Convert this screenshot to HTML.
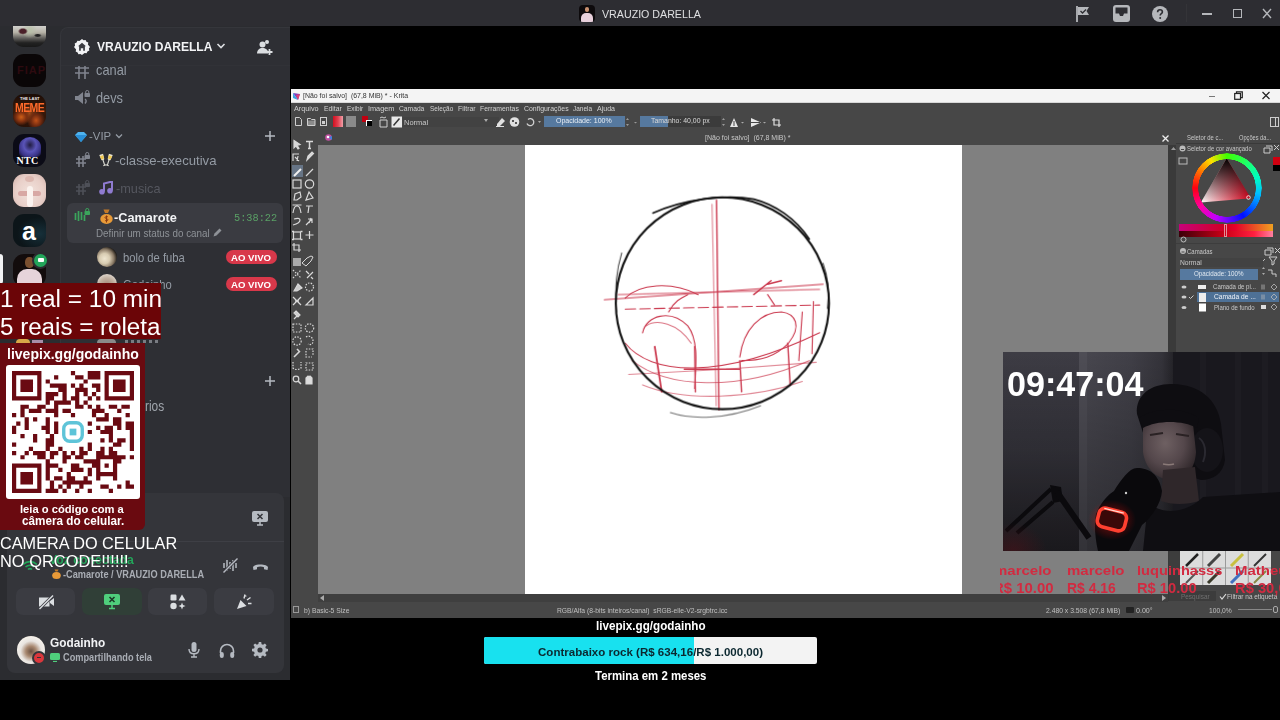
<!DOCTYPE html>
<html><head><meta charset="utf-8">
<style>
*{box-sizing:border-box;margin:0;padding:0}
html,body{width:1280px;height:720px;overflow:hidden;background:#000;font-family:"Liberation Sans",sans-serif;position:relative}
.a{position:absolute}
.tx{position:absolute;white-space:pre;line-height:1}
.srv{position:absolute;left:13px;width:33px;height:33px;border-radius:11px;overflow:hidden}
.live{position:absolute;left:226px;width:51px;height:14px;border-radius:7px;background:#d8384a;z-index:2}

</style></head><body>
<!-- discord -->
<div class="a" style="left:0;top:0;width:1280px;height:26px;background:#2d2d32"></div>
<div class="a" style="left:579px;top:5px;width:16px;height:17px;border-radius:4px;background:#0d0a0c;overflow:hidden"><div class="a" style="left:2px;top:8px;width:12px;height:9px;border-radius:5px 5px 0 0;background:#e8d0dc"></div><div class="a" style="left:6px;top:2px;width:4px;height:5px;border-radius:2px;background:#c89070"></div></div>
<!-- topbar icons -->
<svg class="a" style="left:1075px;top:5px" width="17" height="17" viewBox="0 0 17 17"><path d="M2 1v16" stroke="#b5b7bb" stroke-width="1.8"/><path d="M3 2h11l-2.5 4 2.5 4H3z" fill="#b5b7bb"/><path d="M5.5 6l2 2 3.5-3.5" stroke="#2d2d32" stroke-width="1.3" fill="none"/></svg>
<svg class="a" style="left:1113px;top:5px" width="17" height="17" viewBox="0 0 17 17"><rect x="0" y="0" width="17" height="17" rx="3" fill="#b5b7bb"/><path d="M2.5 2.5h12v6h-3.5l-1 2.5h-3l-1-2.5H2.5z" fill="#2d2d32"/></svg>
<svg class="a" style="left:1152px;top:6px" width="16" height="16" viewBox="0 0 16 16"><circle cx="8" cy="8" r="8" fill="#b5b7bb"/><path d="M5.6 6.2c0-1.5 1.1-2.4 2.4-2.4s2.4.9 2.4 2.2c0 1.6-2.2 1.7-2.2 3.4" stroke="#2d2d32" stroke-width="1.6" fill="none"/><circle cx="8.2" cy="12" r="1" fill="#2d2d32"/></svg>
<div class="a" style="left:1186px;top:4px;width:1px;height:18px;background:#343438"></div>
<div class="a" style="left:1202px;top:13px;width:10px;height:1.5px;background:#b5b7bb"></div>
<div class="a" style="left:1233px;top:9px;width:9px;height:9px;border:1.5px solid #b5b7bb"></div>
<svg class="a" style="left:1262px;top:8px" width="10" height="11" viewBox="0 0 10 11"><path d="M1 1l8 9M9 1l-8 9" stroke="#b5b7bb" stroke-width="1.4"/></svg>
<!-- discord body -->
<div class="a" style="left:0;top:26px;width:290px;height:654px;background:#2b2c30"></div>
<div class="a" style="left:60px;top:27px;width:230px;height:470px;border-left:1px solid #35363b;border-top:1px solid #35363b;border-top-left-radius:8px;background:#2e2f34"></div>
<div class="a" style="left:61px;top:65px;width:229px;height:1px;background:#313237"></div>
<!-- server icons -->
<div class="srv" style="top:26px;height:21px;border-radius:0 0 11px 11px;background:radial-gradient(ellipse at 30% 25%,#4a2028 0,#4a2028 3px,transparent 5px),radial-gradient(ellipse at 75% 45%,#222 0,#222 2px,transparent 4px),radial-gradient(ellipse at 50% 20%,#b8c0a8 0,transparent 8px),linear-gradient(180deg,#d0d0cc 0%,#b8b4a8 30%,#6a6864 55%,#222 80%,#181818 100%)"></div>
<div class="srv" style="top:54px;background:#0a0607"><span class="a" style="left:4px;top:10px;font:bold 11px 'Liberation Sans',sans-serif;color:#2e0a10;letter-spacing:1px">FIAP</span></div>
<div class="srv" style="top:94px;background:radial-gradient(ellipse at 25% 70%,#d06018 0,#803010 5px,transparent 9px),radial-gradient(ellipse at 70% 80%,#c05018 0,#702a10 5px,transparent 9px),radial-gradient(ellipse at 50% 60%,#a04a18 0,transparent 8px),linear-gradient(180deg,#1a0c06 0%,#3a1a0a 45%,#2a1208 100%)"><span class="a" style="left:7px;top:2px;font:bold 4px 'Liberation Sans',sans-serif;color:#eee">THE LAST</span><span class="a" style="left:2px;top:7px;font:bold 10.5px 'Liberation Sans',sans-serif;color:#ff6a2a;letter-spacing:-0.6px;transform:scaleY(1.2)">MEME</span></div>
<div class="srv" style="top:134px;background:#0b0b16"><div class="a" style="left:6px;top:3px;width:22px;height:20px;border-radius:50% 50% 20% 20%;background:radial-gradient(ellipse at 50% 40%,#201c40 0%,#5a54b8 40%,#3a3488 70%,#0b0b16 100%)"></div><span class="a" style="left:3.5px;top:21px;font:bold 10px 'Liberation Serif',serif;color:#fff;letter-spacing:.3px">NTC</span></div>
<div class="srv" style="top:174px;background:radial-gradient(ellipse at 50% 55%,#f2e2dc 0%,#e8cfc8 60%,#d0b0a8 100%)"><div class="a" style="left:12px;top:2px;width:9px;height:6px;border-radius:50%;background:#dcb8b0"></div><div class="a" style="left:5px;top:17px;width:23px;height:5px;background:#d8a8a4;border-radius:3px"></div><div class="a" style="left:13.5px;top:12px;width:6px;height:21px;background:#fbf3ef;border-radius:3px"></div></div>
<div class="srv" style="top:214px;background:radial-gradient(ellipse at 80% 60%,#16303a 0%,#0c1519 60%)"><span class="a" style="left:9px;top:3px;font:700 25px 'Liberation Sans',sans-serif;color:#fff">a</span></div>
<div class="srv" style="top:254px;background:#120c0c"><div class="a" style="left:12px;top:3px;width:9px;height:11px;border-radius:45%;background:#7a5030"></div><div class="a" style="left:4px;top:15px;width:25px;height:20px;border-radius:10px 10px 0 0;background:#e6d4da"></div></div>
<div class="a" style="left:32px;top:252px;width:17px;height:17px;border-radius:50%;background:#23a55a;border:2px solid #2b2c30"><div class="a" style="left:4px;top:4px;width:6px;height:4px;background:#fff;border-radius:1px"></div></div>
<div class="a" style="left:0;top:254px;width:3px;height:30px;background:#f2f3f5;border-radius:0 3px 3px 0"></div>
<!-- header icons -->
<svg class="a" style="left:74px;top:39px" width="16" height="16" viewBox="0 0 16 16"><path fill="#f2f3f5" d="M8 0l1.6 1.3 2-.4.8 1.9 1.9.8-.4 2L16 8l-1.1 1.6.4 2-1.9.8-.8 1.9-2-.4L8 16l-1.6-1.1-2 .4-.8-1.9-1.9-.8.4-2L0 8l1.1-1.6-.4-2 1.9-.8.8-1.9 2 .4z"/><path fill="#3b3c42" d="M8 3.8l4 3.4h-1.1v4.6H9.2V9.2H6.8v2.6H5.1V7.2H4z"/></svg>
<svg class="a" style="left:216px;top:42px" width="10" height="8" viewBox="0 0 10 8"><path d="M1.5 2l3.5 3.5L8.5 2" stroke="#dbdee1" stroke-width="1.6" fill="none"/></svg>
<svg class="a" style="left:256px;top:39px" width="17" height="17" viewBox="0 0 17 17"><circle cx="6.5" cy="5.5" r="3" fill="#dbdee1"/><path d="M1 14.5c0-3.5 2.5-5.5 5.5-5.5S12 11 12 13v1.5z" fill="#dbdee1"/><circle cx="11" cy="3" r="2" fill="#dbdee1"/><path d="M13.5 10v6M10.5 13h6" stroke="#dbdee1" stroke-width="1.8"/></svg>
<!-- canal (clipped) -->
<div class="a" style="left:61px;top:66px;width:229px;height:20px;overflow:hidden;z-index:2">
  <svg class="a" style="left:13px;top:-1px" width="16" height="14" viewBox="0 0 16 14"><path d="M1 3h14M1 8h14M5 1v13M11 1v13" stroke="#80848e" stroke-width="1.6" fill="none"/></svg>
  <span class="tx" style="left:35.3px;top:-3.55px;font:400 14.6px 'Liberation Sans',sans-serif;color:#949ba4;transform:scaleX(0.877);transform-origin:0 0">canal</span>
</div>
<svg class="a" style="left:74px;top:90px" width="17" height="16" viewBox="0 0 17 16"><path d="M1 6h3l5-4v12l-5-4H1z" fill="#80848e"/><rect x="10.5" y="3" width="5.5" height="4" rx=".8" fill="#80848e"/><path d="M11.7 3.2V2a1.55 1.55 0 0 1 3.1 0v1.2" stroke="#80848e" stroke-width="1" fill="none"/><path d="M11 9c1.5 1 1.5 3 0 4.5" stroke="#80848e" stroke-width="1.5" fill="none"/></svg>
<svg class="a" style="left:75px;top:132px" width="12" height="10" viewBox="0 0 12 10"><path d="M3 0h6l3 3-6 7-6-7z" fill="#4fb3ef"/><path d="M0 3h12L6 10z" fill="#2a8fd6"/></svg>
<svg class="a" style="left:115px;top:133px" width="8" height="6" viewBox="0 0 8 6"><path d="M1 1.5l3 3 3-3" stroke="#949ba4" stroke-width="1.3" fill="none"/></svg>
<svg class="a" style="left:265px;top:131px" width="10" height="10" viewBox="0 0 10 10"><path d="M5 0v10M0 5h10" stroke="#b5bac1" stroke-width="1.5"/></svg>
<svg class="a" style="left:75px;top:152px" width="15" height="15" viewBox="0 0 15 15"><path d="M1 7h10M1 11h10M4 4v11M8 4v11" stroke="#80848e" stroke-width="1.6" fill="none"/><rect x="9.5" y="3" width="5.5" height="4" rx=".8" fill="#80848e"/><path d="M10.7 3.2V2a1.55 1.55 0 0 1 3.1 0v1.2" stroke="#80848e" stroke-width="1" fill="none"/></svg>
<svg class="a" style="left:99px;top:153px" width="14" height="14" viewBox="0 0 14 14"><g transform="rotate(-18 4 7)"><path d="M2 1h4l-.5 5.5c-.3 1-2.7 1-3 0z" fill="#e8e4d0"/><path d="M2.3 2.5h3.4l-.3 3.5h-2.8z" fill="#f0c850"/><path d="M4 7v5M2.5 12.5h3" stroke="#d8d8d0" stroke-width="1.1"/></g><g transform="rotate(18 10 7)"><path d="M8 1h4l-.5 5.5c-.3 1-2.7 1-3 0z" fill="#e8e4d0"/><path d="M8.3 2.5h3.4l-.3 3.5h-2.8z" fill="#f0c850"/><path d="M10 7v5M8.5 12.5h3" stroke="#d8d8d0" stroke-width="1.1"/></g></svg>
<svg class="a" style="left:75px;top:180px" width="15" height="15" viewBox="0 0 15 15"><path d="M1 7h10M1 11h10M4 4v11M8 4v11" stroke="#4e5058" stroke-width="1.6" fill="none"/><rect x="9.5" y="3" width="5.5" height="4" rx=".8" fill="#4e5058"/><path d="M10.7 3.2V2a1.55 1.55 0 0 1 3.1 0v1.2" stroke="#4e5058" stroke-width="1" fill="none"/></svg>
<svg class="a" style="left:99px;top:181px" width="14" height="14" viewBox="0 0 14 14"><path d="M5 10.5V2.5l8-2v9" stroke="#8f7bd0" stroke-width="2" fill="none"/><circle cx="3" cy="10.8" r="2.8" fill="#8f7bd0"/><circle cx="11" cy="9.8" r="2.8" fill="#8f7bd0"/></svg>
<!-- selected voice channel -->
<div class="a" style="left:67px;top:203px;width:216px;height:40px;border-radius:6px;background:#3a3b41"></div>
<svg class="a" style="left:74px;top:208px" width="16" height="15" viewBox="0 0 16 15"><path d="M1.5 5v7M4.5 3v10M7.5 4v8M10.5 7v6" stroke="#3ba55c" stroke-width="1.7"/><rect x="10.5" y="3" width="5.5" height="4" rx=".8" fill="#3ba55c"/><path d="M11.7 3.2V2a1.55 1.55 0 0 1 3.1 0v1.2" stroke="#3ba55c" stroke-width="1" fill="none"/></svg>
<svg class="a" style="left:100px;top:209px" width="13" height="15" viewBox="0 0 13 15"><path d="M3.5 0.5h6l-1.5 3.5h-3z" fill="#c47a28"/><ellipse cx="6.5" cy="10" rx="6.2" ry="5" fill="#e89a38"/><path d="M6.5 6.5v7M8 8c-.5-.7-3-.7-3 .6s3 .8 3 2.2-2.5 1.2-3 .5" stroke="#8a3a10" stroke-width="1" fill="none"/></svg>
<svg class="a" style="left:213px;top:228px" width="9" height="9" viewBox="0 0 9 9"><path d="M0.5 8.5l1-3 5-5 2 2-5 5z" fill="#8e9297"/></svg>
<div class="a" style="left:97px;top:247px;width:20px;height:20px;border-radius:50%;background:radial-gradient(circle at 38% 58%,#efe6d0 0%,#d8ccb2 30%,#8a7a66 55%,#1c1814 75%)"></div>
<div class="live" style="top:250px"></div>
<div class="a" style="left:97px;top:274px;width:20px;height:20px;border-radius:50%;background:radial-gradient(circle at 50% 60%,#a08070 0%,#c0b0a0 50%,#e0d8d0 80%)"></div>
<div class="live" style="top:277px"></div>
<!-- misc hidden channels -->
<span class="tx" style="left:144.5px;top:398px;font:400 14px 'Liberation Sans',sans-serif;color:#a0a5ac;transform:scaleX(0.85);transform-origin:0 0">rios</span>
<svg class="a" style="left:265px;top:376px" width="10" height="10" viewBox="0 0 10 10"><path d="M5 0v10M0 5h10" stroke="#b5bac1" stroke-width="1.5"/></svg>
<!-- voice panel -->
<div class="a" style="left:7px;top:493px;width:277px;height:180px;border-radius:8px;background:#34353a"></div>
<div class="a" style="left:7px;top:541px;width:277px;height:1px;background:#3e3f45"></div>
<svg class="a" style="left:252px;top:511px" width="16" height="15" viewBox="0 0 16 15"><rect x="0" y="0" width="16" height="11" rx="2" fill="#b5bac1"/><path d="M5.5 3l5 5M10.5 3l-5 5" stroke="#34353a" stroke-width="1.5"/><path d="M8 11v3M5 14h6" stroke="#b5bac1" stroke-width="1.5"/></svg>
<svg class="a" style="left:22px;top:560px" width="16" height="12" viewBox="0 0 16 12"><path d="M1 4.5a10 10 0 0 1 14 0M3.5 7a6.5 6.5 0 0 1 9 0M6 9.5a3 3 0 0 1 4 0" stroke="#23a55a" stroke-width="1.6" fill="none"/></svg>
<svg class="a" style="left:52px;top:569px" width="9" height="10" viewBox="0 0 9 10"><path d="M2.5 0.5h4l-1 2h-2z" fill="#c47a28"/><ellipse cx="4.5" cy="6.5" rx="4.3" ry="3.5" fill="#e89a38"/></svg>
<svg class="a" style="left:222px;top:557px" width="17" height="17" viewBox="0 0 17 17"><path d="M2 6v5M5 3v11M8 5v7M11 3v11M14 6v5" stroke="#b5bac1" stroke-width="1.5"/><path d="M1 16L16 1" stroke="#34353a" stroke-width="3"/><path d="M1.5 15.5l14-14" stroke="#b5bac1" stroke-width="1.5"/></svg>
<svg class="a" style="left:252px;top:561px" width="17" height="10" viewBox="0 0 17 10"><path d="M1 6.5c0-4 15-4 15 0l-.5 2.5-3.5-.8v-2c-2-.8-5-.8-7 0v2l-3.5.8z" fill="#b5bac1"/></svg>
<div class="a" style="left:16px;top:588px;width:59px;height:27px;border-radius:7px;background:#3b3c42"></div>
<div class="a" style="left:82px;top:588px;width:60px;height:27px;border-radius:7px;background:#303f37"></div>
<div class="a" style="left:148px;top:588px;width:59px;height:27px;border-radius:7px;background:#3b3c42"></div>
<div class="a" style="left:214px;top:588px;width:60px;height:27px;border-radius:7px;background:#3b3c42"></div>
<svg class="a" style="left:38px;top:594px" width="17" height="16" viewBox="0 0 17 16"><path d="M1 3.5h10.5v9H1z" fill="#dbdee1"/><path d="M12 7l4-3v8l-4-3z" fill="#dbdee1"/><path d="M1 15.5L15.5 1" stroke="#3b3c42" stroke-width="3"/><path d="M1.5 15L15 1.5" stroke="#dbdee1" stroke-width="1.4"/></svg>
<svg class="a" style="left:104px;top:594px" width="16" height="16" viewBox="0 0 16 16"><rect x="0" y="0" width="16" height="11" rx="2" fill="#4fcf7c"/><path d="M5.5 3l5 5M10.5 3l-5 5" stroke="#1d3a28" stroke-width="1.6"/><path d="M8 11v3M5 14.5h6" stroke="#4fcf7c" stroke-width="1.5"/></svg>
<svg class="a" style="left:170px;top:594px" width="16" height="16" viewBox="0 0 16 16"><rect x="0.5" y="0.5" width="6" height="6" rx="1.2" fill="#dbdee1"/><path d="M12 0.5l3.5 6h-7z" fill="#dbdee1"/><circle cx="3.5" cy="12" r="3.2" fill="#dbdee1"/><path d="M12 8.5l1 2.5 2.5 1-2.5 1-1 2.5-1-2.5-2.5-1 2.5-1z" fill="#dbdee1"/></svg>
<svg class="a" style="left:236px;top:594px" width="16" height="16" viewBox="0 0 16 16"><path d="M1 15l3.5-9 6 6z" fill="#dbdee1"/><path d="M8 4.5l1-4M11 6l3.5-2.5M12 9.5h3.5M9.5 2.5l.5-1" stroke="#dbdee1" stroke-width="1.4"/></svg>
<!-- user -->
<div class="a" style="left:17px;top:636px;width:28px;height:28px;border-radius:50%;background:radial-gradient(circle at 50% 55%,#6a5040 0%,#a88870 25%,#e8e4e0 50%,#f4f0ea 70%,#d8b888 100%)"></div>
<div class="a" style="left:32px;top:651px;width:14px;height:14px;border-radius:50%;background:#da373c;border:2.5px solid #34353a"><div class="a" style="left:2.5px;top:3.5px;width:4px;height:1.5px;background:#34353a"></div></div>
<svg class="a" style="left:50px;top:653px" width="10" height="9" viewBox="0 0 10 9"><rect x="0" y="0" width="10" height="7" rx="1.5" fill="#4fcf7c"/><path d="M3 8.5h4" stroke="#4fcf7c" stroke-width="1.2"/></svg>
<svg class="a" style="left:188px;top:642px" width="12" height="16" viewBox="0 0 12 16"><rect x="3.5" y="0" width="5" height="10" rx="2.5" fill="#b5bac1"/><path d="M1 7c0 3 2.2 4.8 5 4.8S11 10 11 7M6 12v3M3 15h6" stroke="#b5bac1" stroke-width="1.4" fill="none"/></svg>
<svg class="a" style="left:219px;top:643px" width="16" height="15" viewBox="0 0 16 15"><path d="M1.5 10V8a6.5 6.5 0 0 1 13 0v2" stroke="#b5bac1" stroke-width="1.6" fill="none"/><rect x="0.8" y="9" width="4" height="6" rx="2" fill="#b5bac1"/><rect x="11.2" y="9" width="4" height="6" rx="2" fill="#b5bac1"/></svg>
<svg class="a" style="left:252px;top:642px" width="16" height="16" viewBox="0 0 16 16"><path fill="#b5bac1" d="M6.8 0h2.4l.4 2.2 1.5.6 1.8-1.3 1.7 1.7-1.3 1.8.6 1.5 2.1.4v2.4l-2.1.4-.6 1.5 1.3 1.8-1.7 1.7-1.8-1.3-1.5.6-.4 2.2H6.8l-.4-2.2-1.5-.6-1.8 1.3-1.7-1.7 1.3-1.8-.6-1.5L0 9.2V6.8l2.1-.4.6-1.5-1.3-1.8 1.7-1.7 1.8 1.3 1.5-.6z"/><circle cx="8" cy="8" r="2.6" fill="#34353a"/></svg>

<div class="a" style="left:15.5px;top:338.5px;width:14px;height:4px;border-radius:7px 7px 0 0;background:#d8a848"></div>
<div class="a" style="left:32px;top:339.5px;width:11px;height:3px;background:#c8a8c8;opacity:.8"></div>
<div class="a" style="left:97px;top:339px;width:19px;height:3.5px;border-radius:9px 9px 0 0;background:#8a8a8a"></div>
<div class="a" style="left:125px;top:339.5px;width:34px;height:3px;background:repeating-linear-gradient(90deg,#9a9ea5 0 3px,transparent 3px 6px);opacity:.7"></div>

<!-- krita -->
<div class="a" style="left:291px;top:89px;width:989px;height:529px;background:#474747"></div>
<div class="a" style="left:291px;top:89px;width:989px;height:13.5px;background:#f4f4f4;border-bottom:1px solid #d8d8d8"></div>
<svg class="a" style="left:292px;top:92px" width="9" height="9" viewBox="0 0 9 9"><path d="M1 1l7 1-2 6z" fill="#7a3fc0"/><path d="M1 1l5 7-5-2z" fill="#3fa0e0"/><path d="M4 3l4-1-2 6z" fill="#e04070"/></svg>
<div class="a" style="left:1209px;top:96px;width:6px;height:1px;background:#777"></div>
<svg class="a" style="left:1234px;top:91px" width="9" height="9" viewBox="0 0 9 9"><rect x="0.7" y="2.5" width="5.8" height="5.8" fill="none" stroke="#222" stroke-width="1.2"/><path d="M2.5 2.5V.8h5.8v5.8H6.5" fill="none" stroke="#222" stroke-width="1.2"/></svg>
<svg class="a" style="left:1262px;top:91px" width="8" height="9" viewBox="0 0 8 9"><path d="M.5 1l7 7M7.5 1l-7 7" stroke="#222" stroke-width="1.2"/></svg>
<!-- toolbar icons -->
<svg class="a" style="left:294px;top:115px" width="120" height="13" viewBox="0 0 120 13">
 <path d="M1.5 2.5h4l2 2v6h-6z" fill="none" stroke="#cfcfcf" stroke-width="1"/>
 <path d="M13.5 3.5h3l1 1h3.5v6h-7.5z" fill="none" stroke="#cfcfcf" stroke-width="1"/><rect x="13.5" y="5.5" width="7.5" height="5" fill="#cfcfcf" opacity=".5"/>
 <rect x="26.5" y="2.5" width="6" height="8" fill="none" stroke="#cfcfcf" stroke-width="1"/><rect x="28" y="6" width="3" height="3" fill="#cfcfcf"/>
</svg>
<div class="a" style="left:333px;top:116px;width:10px;height:11px;background:linear-gradient(90deg,#d01020,#e04050 50%,#f0a0a8);"></div>
<div class="a" style="left:346px;top:116px;width:10px;height:11px;background:#8a8a8a"></div>
<div class="a" style="left:362px;top:116px;width:6px;height:6px;background:#c00010"></div>
<div class="a" style="left:366px;top:120px;width:6px;height:6px;background:#000;border-left:1px solid #fff;border-top:1px solid #fff"></div>
<svg class="a" style="left:379px;top:116px" width="24" height="12" viewBox="0 0 24 12"><path d="M1 4h7v7H1zM1 2l2-1 2 1 2-1" fill="none" stroke="#cfcfcf" stroke-width="1"/><rect x="12.5" y="0.5" width="10.5" height="11" fill="#e8e8e8"/><path d="M14.5 9.5l6-7" stroke="#333" stroke-width="1.5"/></svg>
<div class="a" style="left:403px;top:117px;width:96px;height:10px;background:#424242"></div>
<svg class="a" style="left:484px;top:119px" width="4" height="3" viewBox="0 0 4 3"><path d="M0 0h4L2 3z" fill="#aaa"/></svg>
<svg class="a" style="left:495px;top:116px" width="46" height="12" viewBox="0 0 46 12"><path d="M2 8l5-6 3 3-5 5H2z" fill="#e0e0e0"/><path d="M1 10.5h8" stroke="#e0e0e0"/><circle cx="19.5" cy="6" r="4.8" fill="#e0e0e0"/><path d="M17 4h2v2h-2zM20 6h2v2h-2z" fill="#555"/><path d="M33 3.5a3.5 3.5 0 1 1-1 4" stroke="#cfcfcf" stroke-width="1.3" fill="none"/><path d="M43 5h3l-1.5 2z" fill="#aaa"/></svg>
<div class="a" style="left:544px;top:116px;width:81px;height:11px;background:#56799f"></div>
<div class="a" style="left:640px;top:116px;width:81px;height:11px;background:#3b3b3b"></div>
<div class="a" style="left:640px;top:116px;width:28px;height:11px;background:#56799f"></div>
<svg class="a" style="left:625px;top:117px" width="12" height="10" viewBox="0 0 12 10"><path d="M1 3l1.5-2L4 3zM1 7l1.5 2L4 7z" fill="#999"/><path d="M9 5h3l-1.5 1.5z" fill="#999"/></svg>
<svg class="a" style="left:721px;top:117px" width="62" height="11" viewBox="0 0 62 11"><path d="M1 3l1.5-2L4 3zM1 7l1.5 2L4 7z" fill="#999"/><path d="M13 1l4 9H9z" fill="#e8e8e8"/><path d="M13 4v5" stroke="#474747" stroke-width="1"/><path d="M20 5h3l-1.5 1.5z" fill="#aaa"/><path d="M30 1l10 4.5L30 10z" fill="#e8e8e8"/><path d="M30 5.5h9" stroke="#474747"/><path d="M42 5h3l-1.5 1.5z" fill="#aaa"/><path d="M53 1v7h7M51 3h7v7" stroke="#e0e0e0" stroke-width="1.2" fill="none"/></svg>
<svg class="a" style="left:1270px;top:117px" width="9" height="10" viewBox="0 0 9 10"><rect x=".5" y=".5" width="8" height="9" fill="none" stroke="#ccc"/><path d="M5.5 .5v9" stroke="#ccc"/></svg>
<!-- tab row -->
<svg class="a" style="left:325px;top:134px" width="7" height="7" viewBox="0 0 7 7"><circle cx="3.5" cy="3.5" r="3.3" fill="#c050a0"/><path d="M3.5 3.5L7 2v4z" fill="#4080e0"/><circle cx="3" cy="3" r="1.3" fill="#fff"/></svg>
<svg class="a" style="left:1162px;top:135px" width="7" height="7" viewBox="0 0 7 7"><path d="M.5 .5l6 6M6.5 .5l-6 6" stroke="#eee" stroke-width="1.3"/></svg>
<!-- canvas -->
<div class="a" style="left:318px;top:145px;width:850px;height:449px;background:#808080"></div>
<div class="a" style="left:524.5px;top:145px;width:437.5px;height:449px;background:#fff"></div>
<div class="a" style="left:318px;top:594px;width:850px;height:7.5px;background:#3f3f3f"></div>
<svg class="a" style="left:320px;top:595px" width="4" height="6" viewBox="0 0 4 6"><path d="M4 0v6L0 3z" fill="#aaa"/></svg>
<svg class="a" style="left:1162px;top:595px" width="4" height="6" viewBox="0 0 4 6"><path d="M0 0v6l4-3z" fill="#aaa"/></svg>
<!-- toolbox icons -->
<div class="a" style="left:291.5px;top:165px;width:11px;height:12px;background:#6f8196;opacity:.8"></div>
<svg class="a" style="left:291px;top:139px" width="26" height="248" viewBox="0 0 26 248" fill="none" stroke="#d8d8d8" stroke-width="1.2">
 <path d="M3 1.5l6 4-3 .8 2 3-1 .6-2-3-2 2z" fill="#d8d8d8"/>
 <path d="M15 2.5h7M18.5 2.5v7M17 9.5h3" stroke-width="1.5"/>
 <path d="M2 22v-7h6M4 18l4 4M7 17l-1 5" /><path d="M16 21l1-4 4-4 1.5 1.5-4 4z" fill="#d8d8d8"/>
 <path d="M3 37l7-7" stroke="#f0f0f0" stroke-width="2"/><path d="M15 37l7-7"/>
 <rect x="2" y="41" width="8" height="8"/><circle cx="18.5" cy="45" r="4.2"/>
 <path d="M3 61l1-6 5-2 1 5-4 3z"/><path d="M15 61l3-8 4 6z"/>
 <path d="M2 74c1-6 2-7 4-7s3 1 4 7M1.5 66h9M15 67h7M18 67l-1 7"/>
 <path d="M2 86c4-1 7-3 7-5s-3-2-6-1"/><path d="M15 86l6-6M17 80h4v4M18 84l2-5" />
 <rect x="2.5" y="93" width="7" height="7"/><path d="M1 92.5h2M9.5 92.5h2M1 100.5h2M9.5 100.5h2" stroke-width="1.5"/><path d="M18.5 92v8M14.5 96h8"/>
 <path d="M3 104v7h7M1 106h7v7"/>
 <rect x="2" y="119" width="8" height="8" fill="#aaa" stroke="none"/><path d="M15 127l5-5 2-4-2-1-4 2-5 5z" stroke-width="1"/>
 <path d="M2 139l8-8M2 131l8 8" stroke-dasharray="1.5 1.5"/><path d="M15 132l3 3M20 138l2 2M16 139l6-6"/>
 <path d="M3 152l4-7 4 4-5 3z" fill="#ccc"/><circle cx="18.5" cy="148" r="4" stroke-dasharray="1.5 1.3"/>
 <path d="M2 158l8 8M10 158l-8 8M4 162h4"/><path d="M15 166l7-7v7z"/>
 <path d="M3 180l3-3M5 172l4 4-2 2-4-4z" fill="#ccc"/>
 <rect x="2" y="185" width="8" height="8" stroke-dasharray="1.5 1.3"/><circle cx="18.5" cy="189" r="4.2" stroke-dasharray="1.5 1.3"/>
 <circle cx="6" cy="202" r="4.2" stroke-dasharray="1.5 1.3"/><path d="M15 198c3-2 7 0 7 4s-3 4-5 3" stroke-dasharray="1.5 1.3"/>
 <path d="M3 218l4-4M6 210l2 2M9 212l-2 2" stroke-width="1.6"/><path d="M15 210h7v7M15 212v6h6" stroke-dasharray="1.5 1.3"/>
 <path d="M2 223v6c2 2 6 2 8 0v-6" stroke-dasharray="1.5 1.3"/><path d="M15 224l7 0v7h-7z" stroke-dasharray="1.5 1.3"/>
 <circle cx="5" cy="240" r="2.8"/><path d="M7 242l3 3" stroke-width="1.6"/><path d="M15 245v-6l2-2 1 1 1-1 1 1 1 1v6z" fill="#ddd"/>
</svg>
<!-- dock -->
<div class="a" style="left:1168px;top:145px;width:10px;height:456px;background:#3a3a3a"></div><svg class="a" style="left:1171px;top:146px" width="5" height="4" viewBox="0 0 5 4"><path d="M0 4l2.5-3 2.5 3z" fill="#999"/></svg>
<div class="a" style="left:1176px;top:143px;width:104px;height:100px;background:#474747;border-top:1px solid #3a3a3a"></div>
<svg class="a" style="left:1178px;top:144px" width="102" height="96" viewBox="0 0 102 96">
 <circle cx="4.5" cy="4.5" r="3" fill="#bbb"/><path d="M3 5.5h3" stroke="#474747"/>
 <rect x="1" y="14" width="8" height="6" fill="none" stroke="#bbb"/>
 <path d="M88 2h6v5M86 4h6v5h-6z" fill="none" stroke="#ccc" stroke-width="1"/><path d="M96 1l5 5M101 1l-5 5" stroke="#ccc"/>
 <defs>
  <linearGradient id="tri1" x1="0" y1="0" x2="1" y2="0"><stop offset="0" stop-color="#fff"/><stop offset="1" stop-color="#e0001a"/></linearGradient>
  <linearGradient id="tri2" x1="0" y1="0" x2="0" y2="1"><stop offset="0" stop-color="#000"/><stop offset="1" stop-color="#000" stop-opacity="0"/></linearGradient>
 </defs>
 <path d="M48.7 14.3L22.8 58.5 72.8 54.3z" fill="url(#tri1)"/>
 <path d="M48.7 14.3L22.8 58.5 72.8 54.3z" fill="url(#tri2)"/>
 <circle cx="70.5" cy="53.5" r="1.8" fill="none" stroke="#fff" stroke-width=".8"/>
</svg>
<div class="a" style="left:1191.7px;top:152.8px;width:70px;height:70px;border-radius:50%;background:conic-gradient(from 0deg,#40ff00,#00ffc0 70deg,#00c0ff 100deg,#0010ff 150deg,#c000ff 200deg,#ff00a0 235deg,#ff0010 270deg,#ff8000 305deg,#ffe000 330deg,#40ff00 360deg);-webkit-mask:radial-gradient(circle,transparent 28.5px,#000 29px,#000 34.5px,transparent 35px)"></div>
<div class="a" style="left:1179px;top:224px;width:94px;height:6.5px;background:linear-gradient(90deg,#c8007a,#d00020 50%,#e6002a 60%,#f0a020)"></div>
<div class="a" style="left:1179px;top:230.5px;width:94px;height:6.5px;background:linear-gradient(90deg,#3a0008,#d00018 50%,#ff2040 80%,#ff80a0)"></div>
<div class="a" style="left:1224px;top:224px;width:3px;height:13px;border:1px solid #eee;opacity:.6"></div>
<svg class="a" style="left:1180px;top:236px" width="7" height="7" viewBox="0 0 7 7"><circle cx="3.5" cy="3.5" r="2.5" fill="none" stroke="#bbb"/></svg>
<div class="a" style="left:1273px;top:157px;width:7px;height:8px;background:#d00010"></div>
<div class="a" style="left:1273px;top:165px;width:7px;height:6px;background:#000"></div>
<!-- layers -->
<div class="a" style="left:1176px;top:243px;width:104px;height:109px;background:#474747;border-top:1px solid #3d3d3d"></div>
<svg class="a" style="left:1179px;top:247px" width="101" height="70" viewBox="0 0 101 70">
 <circle cx="4" cy="4" r="3" fill="#bbb"/><path d="M2.5 5h3" stroke="#474747"/>
 <path d="M88 1h6v5M86 3h6v5h-6z" fill="none" stroke="#ccc"/><path d="M96 1l5 5M101 1l-5 5" stroke="#ccc"/>
 <path d="M82 12l2 2 2-2" stroke="#bbb" fill="none"/>
 <path d="M90 10h8l-3 4v3l-2 1v-4z" fill="none" stroke="#ccc"/>
 <path d="M89 23h4v4h4v3" stroke="#ccc" fill="none"/>
 <path d="M83 22l1.5-2 1.5 2zM83 26l1.5 2 1.5-2z" fill="#aaa"/>
</svg>
<div class="a" style="left:1180px;top:257.5px;width:83px;height:9px;background:#424242"></div>
<div class="a" style="left:1180px;top:268.5px;width:78px;height:11px;background:#56799f"></div>
<div class="a" style="left:1196.5px;top:291.5px;width:82px;height:10px;background:#4e7196"></div>
<svg class="a" style="left:1180px;top:282px" width="100" height="30" viewBox="0 0 100 30">
 <g fill="#ccc"><ellipse cx="4" cy="5" rx="2.5" ry="1.6"/><ellipse cx="4" cy="15" rx="2.5" ry="1.6"/><ellipse cx="4" cy="25.5" rx="2.5" ry="1.6"/></g>
 <path d="M9 15l1.5 1.5 3-3" stroke="#ccc" fill="none"/>
 <rect x="18" y="3" width="8" height="4" fill="#eee"/><rect x="19" y="11" width="7" height="9" fill="#eee"/><rect x="19" y="21.5" width="7" height="8" fill="#fff"/>
 <path d="M82 2.5v5M84 2.5v5M94 2l3 3-3 3-3-3z" stroke="#bbb" fill="none" stroke-width=".8"/>
 <path d="M82 12.5v5M84 12.5v5M94 12l3 3-3 3-3-3z" stroke="#bbb" fill="none" stroke-width=".8"/>
 <rect x="81" y="23" width="5" height="4" fill="#ddd"/><path d="M94 22l3 3-3 3-3-3z" stroke="#bbb" fill="none" stroke-width=".8"/>
</svg>
<div class="a" style="left:1176px;top:318px;width:104px;height:234px;background:#474747"></div>
<!-- brush presets under webcam -->
<div class="a" style="left:1169px;top:551px;width:11px;height:50px;background:#3d3d3d"></div>
<div class="a" style="left:1180px;top:551px;width:91px;height:34px;background:#dcdcdc"></div>
<svg class="a" style="left:1180px;top:551px" width="91" height="34" viewBox="0 0 91 34">
 <path d="M22.75 0v34M45.5 0v34M68.25 0v34M0 17h91" stroke="#9a9a9a" stroke-width="1"/>
 <path d="M6 15l12-12" stroke="#222" stroke-width="2.5"/><path d="M28 15l12-12" stroke="#444" stroke-width="3"/><path d="M51 15l12-12" stroke="#c8c040" stroke-width="3"/><path d="M74 15l12-12" stroke="#333" stroke-width="2"/>
 <path d="M6 32l12-12" stroke="#555" stroke-width="2"/><path d="M28 32l12-12" stroke="#3a3a2a" stroke-width="3"/><path d="M51 32l12-12" stroke="#4070c0" stroke-width="3"/><path d="M74 32l12-12" stroke="#884" stroke-width="2"/>
</svg>
<div class="a" style="left:1180px;top:591px;width:36px;height:10px;background:#3c3c3c"></div>
<svg class="a" style="left:1219px;top:593px" width="8" height="7" viewBox="0 0 8 7"><path d="M1 3.5l2 2.5 4-5" stroke="#ddd" fill="none" stroke-width="1.2"/></svg>
<div class="a" style="left:1238px;top:609px;width:34px;height:1px;background:#888"></div>
<div class="a" style="left:1272.5px;top:606px;width:5px;height:7px;border:1px solid #aaa;border-radius:2px"></div>
<div class="a" style="left:293px;top:606px;width:6px;height:7px;border:1px solid #999"></div>
<div class="a" style="left:1126px;top:607px;width:8px;height:6px;background:#222;border-radius:1px"></div>

<!-- sketch -->
<svg class="a" style="left:580px;top:180px;z-index:2" width="280" height="250" viewBox="0 0 806 720">
 <g fill="none" stroke="#c42038" stroke-width="3.2" stroke-linecap="round" opacity=".9">
  <path d="M393 58L400 662" stroke-width="4"/>
  <path d="M380 70L392 650" opacity=".6"/>
  <path d="M70 345L700 300"/>
  <path d="M110 330L690 315" opacity=".7"/>
  <path d="M130 372L690 360" stroke-dasharray="30 12"/>
  <path d="M300 545L460 545" stroke-width="4"/>
  <path d="M130 470C200 560 400 580 690 440"/>
  <path d="M150 520C250 600 450 610 660 520" opacity=".7"/>
  <path d="M180 590C300 640 500 630 640 580" opacity=".6"/>
  <path d="M180 440C190 390 260 370 310 420C340 460 335 520 330 600"/>
  <path d="M190 420C220 400 280 410 320 470" opacity=".7"/>
  <path d="M460 510C470 430 520 380 580 380C620 385 640 420 600 470C560 510 520 520 465 520"/>
  <path d="M215 480L235 610" stroke-width="5"/>
  <path d="M330 480L332 610" stroke-width="4"/>
  <path d="M460 520L465 610" stroke-width="4"/>
  <path d="M598 470L605 590" stroke-width="4"/>
  <path d="M640 380L630 520"/>
  <path d="M672 350L668 500"/>
  <path d="M130 340C170 300 260 290 340 330"/>
  <path d="M255 380C270 350 290 340 310 330"/>
  <path d="M500 330L550 290M540 300L580 290" stroke-width="4"/>
  <path d="M540 330L560 360"/>
  <path d="M140 560L420 545L680 525" opacity=".6"/>
 </g>
 <g fill="none" stroke="#111" stroke-linecap="round">
  <ellipse cx="410" cy="355" rx="307" ry="305" stroke-width="6"/>
  <path d="M210 95C300 55 420 40 500 55C560 70 620 110 660 170" stroke-width="5"/>
  <path d="M120 210C105 260 100 300 105 380" stroke-width="3" opacity=".8"/>
  <path d="M700 240C715 280 718 330 712 370" stroke-width="3" opacity=".7"/>
  <path d="M260 670C320 690 420 690 520 650" stroke-width="3" opacity=".6"/>
 </g>
</svg>

<!-- webcam -->
<div class="a" style="left:1003px;top:352px;width:277px;height:199px;overflow:hidden;z-index:5;background:#1a191e">
 <svg class="a" style="left:0;top:0" width="277" height="199" viewBox="0 0 277 199">
  <defs>
   <linearGradient id="wall" x1="0" y1="0" x2="0" y2="1"><stop offset="0" stop-color="#3d3c44"/><stop offset=".5" stop-color="#37363e"/><stop offset="1" stop-color="#28262c"/></linearGradient>
   <linearGradient id="cur" x1="0" y1="0" x2="1" y2="0"><stop offset="0" stop-color="#47464e"/><stop offset=".5" stop-color="#403f47"/><stop offset=".85" stop-color="#34333a"/><stop offset="1" stop-color="#222126"/></linearGradient>
   <linearGradient id="curv" x1="0" y1="0" x2="0" y2="1"><stop offset="0" stop-color="#000" stop-opacity="0"/><stop offset="1" stop-color="#000" stop-opacity=".35"/></linearGradient>
   <radialGradient id="face" cx="0.42" cy="0.4" r="0.65"><stop offset="0" stop-color="#6e6062"/><stop offset=".55" stop-color="#54474b"/><stop offset="1" stop-color="#2e2629"/></radialGradient>
   <radialGradient id="redt" cx="0.5" cy="0.5" r="0.5"><stop offset="0" stop-color="#5a1018" stop-opacity=".45"/><stop offset="1" stop-color="#5a1018" stop-opacity="0"/></radialGradient>
   <radialGradient id="glow" cx="0.5" cy="0.5" r="0.5"><stop offset="0" stop-color="#ff2a20" stop-opacity=".5"/><stop offset="1" stop-color="#ff0000" stop-opacity="0"/></radialGradient>
  </defs>
  <rect x="0" y="0" width="78" height="199" fill="url(#wall)"/>
  <rect x="76" y="0" width="9" height="199" fill="#4e4d55"/>
  <rect x="84" y="0" width="88" height="199" fill="url(#cur)"/>
  <rect x="0" y="0" width="172" height="199" fill="url(#curv)"/>
  <rect x="170" y="0" width="107" height="199" fill="#19181e"/>
  <path d="M200 0v199M235 0v199M262 0v199" stroke="#1d1c22" stroke-width="6"/>
  <!-- hair & headphones -->
  <path d="M134 62C132 42 150 31 170 32C196 33 214 46 218 72L222 108C220 122 210 128 198 128L150 112Z" fill="#0e0d11"/>
  <ellipse cx="204" cy="98" rx="16" ry="22" fill="#141318"/>
  <path d="M196 86c6 4 8 14 4 24" stroke="#2a2930" stroke-width="2" fill="none"/>
  <!-- face -->
  <path d="M140 72C150 66 175 64 190 72L193 100C192 118 182 128 168 128C152 127 142 115 140 100Z" fill="url(#face)"/><path d="M136 66C150 56 178 54 196 66L194 76C180 68 154 68 140 76Z" fill="#0e0d11"/>
  <path d="M147 83l13-2M173 82l13 2" stroke="#2a2224" stroke-width="2.2"/>
  <path d="M160 112c4 1 8 1 11 0" stroke="#8a7a78" stroke-width="1.5"/>
  <!-- neck & shirt -->
  <path d="M160 118l32-3 4 34c-12 4-28 4-38 0z" fill="#2f272a"/>
  <path d="M145 150C160 165 185 160 200 145L277 140V199H140z" fill="#0f0e12"/>
  <!-- mic arm -->
  <path d="M3 179L48 137M14 181L50 150" stroke="#0b0a0d" stroke-width="4" fill="none"/>
  <path d="M47 133l11 2 2 14-10 2z" fill="#0b0a0d"/>
  <path d="M54 140L86 186" stroke="#0b0a0d" stroke-width="6" fill="none"/>
  <!-- mic body -->
  <path d="M134 116C146 116 156 122 159 139C158 152 148 166 139 173L126 199H95C92 185 91 172 93 162C98 150 105 143 111 139C118 128 126 116 134 116Z" fill="#0a090c"/>
  <circle cx="123" cy="141" r="1.2" fill="#ccc"/>
  <ellipse cx="109" cy="168" rx="24" ry="20" fill="url(#glow)"/>
  <g transform="rotate(14 109 167)">
   <rect x="95" y="158" width="28" height="19" rx="6" fill="#3a0808" stroke="#ff4030" stroke-width="3.6"/>
   <path d="M99 158.5h20" stroke="#ffd8d0" stroke-width="1.2"/>
  </g>
  <ellipse cx="10" cy="199" rx="34" ry="28" fill="url(#redt)"/>
 </svg>
</div>
<div class="a" style="left:990px;top:560px;width:9.5px;height:34px;background:#808080;z-index:5"></div>

<!-- overlay -->
<div class="a" style="left:0;top:283px;width:161px;height:56px;background:#6b0507;z-index:10"></div>
<div class="a" style="left:0;top:342.5px;width:145px;height:187.5px;background:#6a0a10;border-radius:0 0 6px 0;z-index:10"></div>
<div class="a" style="left:6px;top:365px;width:134px;height:134px;background:#fff;border-radius:3px;z-index:10"></div>
<svg class="a" style="left:12px;top:370.5px;z-index:10" width="122" height="122" viewBox="0 0 29 29"><path d="M0 0h1v1h-1zM1 0h1v1h-1zM2 0h1v1h-1zM3 0h1v1h-1zM4 0h1v1h-1zM5 0h1v1h-1zM6 0h1v1h-1zM14 0h1v1h-1zM18 0h1v1h-1zM19 0h1v1h-1zM20 0h1v1h-1zM22 0h1v1h-1zM23 0h1v1h-1zM24 0h1v1h-1zM25 0h1v1h-1zM26 0h1v1h-1zM27 0h1v1h-1zM28 0h1v1h-1zM0 1h1v1h-1zM6 1h1v1h-1zM10 1h1v1h-1zM15 1h1v1h-1zM16 1h1v1h-1zM18 1h1v1h-1zM19 1h1v1h-1zM20 1h1v1h-1zM22 1h1v1h-1zM28 1h1v1h-1zM0 2h1v1h-1zM2 2h1v1h-1zM3 2h1v1h-1zM4 2h1v1h-1zM6 2h1v1h-1zM8 2h1v1h-1zM17 2h1v1h-1zM22 2h1v1h-1zM24 2h1v1h-1zM25 2h1v1h-1zM26 2h1v1h-1zM28 2h1v1h-1zM0 3h1v1h-1zM2 3h1v1h-1zM3 3h1v1h-1zM4 3h1v1h-1zM6 3h1v1h-1zM9 3h1v1h-1zM10 3h1v1h-1zM11 3h1v1h-1zM12 3h1v1h-1zM14 3h1v1h-1zM16 3h1v1h-1zM19 3h1v1h-1zM20 3h1v1h-1zM22 3h1v1h-1zM24 3h1v1h-1zM25 3h1v1h-1zM26 3h1v1h-1zM28 3h1v1h-1zM0 4h1v1h-1zM2 4h1v1h-1zM3 4h1v1h-1zM4 4h1v1h-1zM6 4h1v1h-1zM11 4h1v1h-1zM12 4h1v1h-1zM15 4h1v1h-1zM16 4h1v1h-1zM17 4h1v1h-1zM20 4h1v1h-1zM22 4h1v1h-1zM24 4h1v1h-1zM25 4h1v1h-1zM26 4h1v1h-1zM28 4h1v1h-1zM0 5h1v1h-1zM6 5h1v1h-1zM8 5h1v1h-1zM9 5h1v1h-1zM10 5h1v1h-1zM12 5h1v1h-1zM15 5h1v1h-1zM17 5h1v1h-1zM19 5h1v1h-1zM22 5h1v1h-1zM28 5h1v1h-1zM0 6h1v1h-1zM1 6h1v1h-1zM2 6h1v1h-1zM3 6h1v1h-1zM4 6h1v1h-1zM5 6h1v1h-1zM6 6h1v1h-1zM8 6h1v1h-1zM9 6h1v1h-1zM12 6h1v1h-1zM14 6h1v1h-1zM15 6h1v1h-1zM18 6h1v1h-1zM20 6h1v1h-1zM22 6h1v1h-1zM23 6h1v1h-1zM24 6h1v1h-1zM25 6h1v1h-1zM26 6h1v1h-1zM27 6h1v1h-1zM28 6h1v1h-1zM8 7h1v1h-1zM10 7h1v1h-1zM11 7h1v1h-1zM12 7h1v1h-1zM13 7h1v1h-1zM15 7h1v1h-1zM17 7h1v1h-1zM2 8h1v1h-1zM3 8h1v1h-1zM6 8h1v1h-1zM7 8h1v1h-1zM10 8h1v1h-1zM15 8h1v1h-1zM16 8h1v1h-1zM18 8h1v1h-1zM20 8h1v1h-1zM23 8h1v1h-1zM24 8h1v1h-1zM26 8h1v1h-1zM27 8h1v1h-1zM2 9h1v1h-1zM4 9h1v1h-1zM5 9h1v1h-1zM6 9h1v1h-1zM8 9h1v1h-1zM9 9h1v1h-1zM10 9h1v1h-1zM12 9h1v1h-1zM13 9h1v1h-1zM19 9h1v1h-1zM20 9h1v1h-1zM21 9h1v1h-1zM25 9h1v1h-1zM0 10h1v1h-1zM2 10h1v1h-1zM10 10h1v1h-1zM14 10h1v1h-1zM19 10h1v1h-1zM22 10h1v1h-1zM27 10h1v1h-1zM3 11h1v1h-1zM5 11h1v1h-1zM8 11h1v1h-1zM20 11h1v1h-1zM21 11h1v1h-1zM22 11h1v1h-1zM24 11h1v1h-1zM25 11h1v1h-1zM1 12h1v1h-1zM3 12h1v1h-1zM8 12h1v1h-1zM10 12h1v1h-1zM18 12h1v1h-1zM24 12h1v1h-1zM25 12h1v1h-1zM27 12h1v1h-1zM28 12h1v1h-1zM0 13h1v1h-1zM3 13h1v1h-1zM7 13h1v1h-1zM8 13h1v1h-1zM10 13h1v1h-1zM20 13h1v1h-1zM22 13h1v1h-1zM23 13h1v1h-1zM25 13h1v1h-1zM27 13h1v1h-1zM28 13h1v1h-1zM0 14h1v1h-1zM8 14h1v1h-1zM10 14h1v1h-1zM18 14h1v1h-1zM21 14h1v1h-1zM22 14h1v1h-1zM23 14h1v1h-1zM28 14h1v1h-1zM2 15h1v1h-1zM5 15h1v1h-1zM9 15h1v1h-1zM23 15h1v1h-1zM28 15h1v1h-1zM5 16h1v1h-1zM8 16h1v1h-1zM9 16h1v1h-1zM21 16h1v1h-1zM23 16h1v1h-1zM25 16h1v1h-1zM26 16h1v1h-1zM28 16h1v1h-1zM0 17h1v1h-1zM8 17h1v1h-1zM9 17h1v1h-1zM18 17h1v1h-1zM24 17h1v1h-1zM25 17h1v1h-1zM28 17h1v1h-1zM4 18h1v1h-1zM8 18h1v1h-1zM11 18h1v1h-1zM16 18h1v1h-1zM18 18h1v1h-1zM21 18h1v1h-1zM23 18h1v1h-1zM28 18h1v1h-1zM0 19h1v1h-1zM3 19h1v1h-1zM5 19h1v1h-1zM6 19h1v1h-1zM7 19h1v1h-1zM9 19h1v1h-1zM10 19h1v1h-1zM12 19h1v1h-1zM14 19h1v1h-1zM16 19h1v1h-1zM17 19h1v1h-1zM20 19h1v1h-1zM21 19h1v1h-1zM23 19h1v1h-1zM24 19h1v1h-1zM2 20h1v1h-1zM6 20h1v1h-1zM7 20h1v1h-1zM9 20h1v1h-1zM12 20h1v1h-1zM13 20h1v1h-1zM15 20h1v1h-1zM16 20h1v1h-1zM20 20h1v1h-1zM21 20h1v1h-1zM22 20h1v1h-1zM23 20h1v1h-1zM24 20h1v1h-1zM25 20h1v1h-1zM26 20h1v1h-1zM28 20h1v1h-1zM8 21h1v1h-1zM12 21h1v1h-1zM17 21h1v1h-1zM18 21h1v1h-1zM19 21h1v1h-1zM20 21h1v1h-1zM24 21h1v1h-1zM25 21h1v1h-1zM0 22h1v1h-1zM1 22h1v1h-1zM2 22h1v1h-1zM3 22h1v1h-1zM4 22h1v1h-1zM5 22h1v1h-1zM6 22h1v1h-1zM8 22h1v1h-1zM9 22h1v1h-1zM10 22h1v1h-1zM14 22h1v1h-1zM15 22h1v1h-1zM19 22h1v1h-1zM20 22h1v1h-1zM22 22h1v1h-1zM24 22h1v1h-1zM0 23h1v1h-1zM6 23h1v1h-1zM8 23h1v1h-1zM11 23h1v1h-1zM14 23h1v1h-1zM15 23h1v1h-1zM16 23h1v1h-1zM18 23h1v1h-1zM20 23h1v1h-1zM24 23h1v1h-1zM0 24h1v1h-1zM2 24h1v1h-1zM3 24h1v1h-1zM4 24h1v1h-1zM6 24h1v1h-1zM8 24h1v1h-1zM13 24h1v1h-1zM18 24h1v1h-1zM20 24h1v1h-1zM21 24h1v1h-1zM22 24h1v1h-1zM23 24h1v1h-1zM24 24h1v1h-1zM0 25h1v1h-1zM2 25h1v1h-1zM3 25h1v1h-1zM4 25h1v1h-1zM6 25h1v1h-1zM8 25h1v1h-1zM10 25h1v1h-1zM11 25h1v1h-1zM13 25h1v1h-1zM14 25h1v1h-1zM17 25h1v1h-1zM20 25h1v1h-1zM24 25h1v1h-1zM0 26h1v1h-1zM2 26h1v1h-1zM3 26h1v1h-1zM4 26h1v1h-1zM6 26h1v1h-1zM9 26h1v1h-1zM12 26h1v1h-1zM13 26h1v1h-1zM14 26h1v1h-1zM15 26h1v1h-1zM16 26h1v1h-1zM17 26h1v1h-1zM18 26h1v1h-1zM27 26h1v1h-1zM0 27h1v1h-1zM6 27h1v1h-1zM9 27h1v1h-1zM11 27h1v1h-1zM13 27h1v1h-1zM16 27h1v1h-1zM21 27h1v1h-1zM22 27h1v1h-1zM25 27h1v1h-1zM27 27h1v1h-1zM28 27h1v1h-1zM0 28h1v1h-1zM1 28h1v1h-1zM2 28h1v1h-1zM3 28h1v1h-1zM4 28h1v1h-1zM5 28h1v1h-1zM6 28h1v1h-1zM8 28h1v1h-1zM9 28h1v1h-1zM10 28h1v1h-1zM12 28h1v1h-1zM15 28h1v1h-1zM18 28h1v1h-1zM23 28h1v1h-1z" fill="#6a0a12"/><rect x="12.3" y="12.3" width="4.4" height="4.4" rx="1.4" fill="none" stroke="#5ec4d8" stroke-width=".8"/><rect x="13.7" y="13.7" width="1.6" height="1.6" fill="#5ec4d8"/></svg>

<!-- bottom -->
<div class="a" style="left:484px;top:636.7px;width:333.3px;height:27.5px;background:#f3f3f3;border-radius:2px"></div>
<div class="a" style="left:484px;top:636.7px;width:210px;height:27.5px;background:#18e1ef;border-radius:2px 0 0 2px"></div>

<span id="title" class="tx" style="left:602.19px;top:7.57px;font:normal 400 11.549px 'Liberation Sans',sans-serif;color:#dfe0e2;z-index:2;transform:scaleX(0.9247);transform-origin:0 0;">VRAUZIO DARELLA</span>
<span id="srv" class="tx" style="left:97.08px;top:40.3px;font:normal 700 12.676px 'Liberation Sans',sans-serif;color:#f2f3f5;z-index:2;transform:scaleX(0.9546);transform-origin:0 0;">VRAUZIO DARELLA</span>
<span id="devs" class="tx" style="left:96.29px;top:90.25px;font:normal 400 14.595px 'Liberation Sans',sans-serif;color:#949ba4;z-index:2;transform:scaleX(0.8766);transform-origin:0 0;">devs</span>
<span id="vip" class="tx" style="left:89.14px;top:129.91px;font:normal 400 11.159px 'Liberation Sans',sans-serif;color:#949ba4;z-index:2;transform:scaleX(1.022);transform-origin:0 0;">-VIP</span>
<span id="classe" class="tx" style="left:114.77px;top:153.44px;font:normal 400 12.973px 'Liberation Sans',sans-serif;color:#949ba4;z-index:2;transform:scaleX(1.0124);transform-origin:0 0;">-classe-executiva</span>
<span id="musica" class="tx" style="left:116.09px;top:182.34px;font:normal 400 12.162px 'Liberation Sans',sans-serif;color:#55575f;z-index:2;transform:scaleX(1.0456);transform-origin:0 0;">-musica</span>
<span id="camarote" class="tx" style="left:114.29px;top:210.21px;font:normal 700 13.239px 'Liberation Sans',sans-serif;color:#f2f3f5;z-index:2;transform:scaleX(0.9616);transform-origin:0 0;">-Camarote</span>
<span id="time" class="tx" style="left:234.08px;top:211.98px;font:normal 400 11.324px 'Liberation Mono',monospace;color:#5aa066;z-index:2;transform:scaleX(0.907);transform-origin:0 0;">5:38:22</span>
<span id="status" class="tx" style="left:96.01px;top:228.37px;font:normal 400 10.27px 'Liberation Sans',sans-serif;color:#8e9297;z-index:2;transform:scaleX(0.9575);transform-origin:0 0;">Definir um status do canal</span>
<span id="bolo" class="tx" style="left:123.13px;top:250.46px;font:normal 400 12.838px 'Liberation Sans',sans-serif;color:#949ba4;z-index:2;transform:scaleX(0.8749);transform-origin:0 0;">bolo de fuba</span>
<span id="goda1" class="tx" style="left:123.24px;top:277.54px;font:normal 400 12.162px 'Liberation Sans',sans-serif;color:#949ba4;z-index:2;transform:scaleX(0.9231);transform-origin:0 0;">Godainho</span>
<span id="live1" class="tx" style="left:231.31px;top:252.97px;font:normal 700 8.873px 'Liberation Sans',sans-serif;color:#fff;z-index:3;transform:scaleX(1.0858);transform-origin:0 0;">AO VIVO</span>
<span id="live2" class="tx" style="left:231.31px;top:279.67px;font:normal 700 8.873px 'Liberation Sans',sans-serif;color:#fff;z-index:3;transform:scaleX(1.0858);transform-origin:0 0;">AO VIVO</span>
<span id="voz" class="tx" style="left:48.58px;top:553.14px;font:normal 700 12.162px 'Liberation Sans',sans-serif;color:#23a55a;z-index:2;transform:scaleX(1.0085);transform-origin:0 0;">Voz conectada</span>
<span id="vchan" class="tx" style="left:63.03px;top:568.5px;font:normal 700 10.0px 'Liberation Sans',sans-serif;color:#a9adb4;z-index:2;transform:scaleX(0.9201);transform-origin:0 0;">-Camarote / VRAUZIO DARELLA</span>
<span id="uname" class="tx" style="left:49.83px;top:635.72px;font:normal 700 12.297px 'Liberation Sans',sans-serif;color:#f2f3f5;z-index:2;transform:scaleX(0.9638);transform-origin:0 0;">Godainho</span>
<span id="ustat" class="tx" style="left:63.03px;top:652.29px;font:normal 700 10.106px 'Liberation Sans',sans-serif;color:#a9adb4;z-index:2;transform:scaleX(0.9115);transform-origin:0 0;">Compartilhando tela</span>
<span id="real1" class="tx" style="left:-0.35px;top:285.39px;font:normal 400 24.257px 'Liberation Sans',sans-serif;color:#fff;z-index:11;transform:scaleX(1.0059);transform-origin:0 0;">1 real = 10 min</span>
<span id="real2" class="tx" style="left:-0.17px;top:313.48px;font:normal 400 24.324px 'Liberation Sans',sans-serif;color:#fff;z-index:11;transform:scaleX(0.9929);transform-origin:0 0;">5 reais = roleta</span>
<span id="lp1" class="tx" style="left:6.82px;top:346.0px;font:normal 700 14.149px 'Liberation Sans',sans-serif;color:#fff;z-index:11;transform:scaleX(0.9939);transform-origin:0 0;">livepix.gg/godainho</span>
<span id="cam1" class="tx" style="left:0.29px;top:534.51px;font:normal 400 15.915px 'Liberation Sans',sans-serif;color:#fff;z-index:11;transform:scaleX(1.0225);transform-origin:0 0;">CAMERA DO CELULAR</span>
<span id="cam2" class="tx" style="left:-0.21px;top:553.31px;font:normal 400 15.915px 'Liberation Sans',sans-serif;color:#fff;z-index:11;transform:scaleX(1.0319);transform-origin:0 0;">NO QRCODE!!!!!!</span>
<span id="lp2" class="tx" style="left:595.68px;top:619.09px;font:normal 700 12.553px 'Liberation Sans',sans-serif;color:#fff;z-index:2;transform:scaleX(0.9297);transform-origin:0 0;">livepix.gg/godainho</span>
<span id="bar" class="tx" style="left:537.84px;top:644.63px;font:normal 700 11.667px 'Liberation Sans',sans-serif;color:#0c2830;z-index:2;transform:scaleX(0.9896);transform-origin:0 0;">Contrabaixo rock (R$ 634,16/R$ 1.000,00)</span>
<span id="termina" class="tx" style="left:594.89px;top:668.19px;font:normal 700 13.378px 'Liberation Sans',sans-serif;color:#fff;z-index:2;transform:scaleX(0.8545);transform-origin:0 0;">Termina em 2 meses</span>
<span id="clock" class="tx" style="left:1006.74px;top:363.82px;font:normal 700 35.211px 'Liberation Sans',sans-serif;color:#fff;z-index:6;transform:scaleX(0.9682);transform-origin:0 0;">09:47:04</span>
<span id="menu0" class="tx" style="left:294.2px;top:104.04px;font:normal 400 8.0px 'Liberation Sans',sans-serif;color:#d2d2d2;z-index:2;transform:scaleX(0.9067);transform-origin:0 0;">Arquivo</span>
<span id="menu1" class="tx" style="left:323.65px;top:104.04px;font:normal 400 8.0px 'Liberation Sans',sans-serif;color:#d2d2d2;z-index:2;transform:scaleX(0.8532);transform-origin:0 0;">Editar</span>
<span id="menu2" class="tx" style="left:346.88px;top:104.04px;font:normal 400 8.0px 'Liberation Sans',sans-serif;color:#d2d2d2;z-index:2;transform:scaleX(0.8125);transform-origin:0 0;">Exibir</span>
<span id="menu3" class="tx" style="left:368.34px;top:103.72px;font:normal 400 8.0px 'Liberation Sans',sans-serif;color:#d2d2d2;z-index:2;transform:scaleX(0.914);transform-origin:0 0;">Imagem</span>
<span id="menu4" class="tx" style="left:399.36px;top:104.04px;font:normal 400 8.0px 'Liberation Sans',sans-serif;color:#d2d2d2;z-index:2;transform:scaleX(0.8378);transform-origin:0 0;">Camada</span>
<span id="menu5" class="tx" style="left:429.88px;top:104.04px;font:normal 400 8.0px 'Liberation Sans',sans-serif;color:#d2d2d2;z-index:2;transform:scaleX(0.8026);transform-origin:0 0;">Seleção</span>
<span id="menu6" class="tx" style="left:458.05px;top:104.04px;font:normal 400 8.0px 'Liberation Sans',sans-serif;color:#d2d2d2;z-index:2;transform:scaleX(0.8587);transform-origin:0 0;">Filtrar</span>
<span id="menu7" class="tx" style="left:480.45px;top:103.72px;font:normal 400 8.0px 'Liberation Sans',sans-serif;color:#d2d2d2;z-index:2;transform:scaleX(0.8559);transform-origin:0 0;">Ferramentas</span>
<span id="menu8" class="tx" style="left:523.65px;top:104.04px;font:normal 400 8.0px 'Liberation Sans',sans-serif;color:#d2d2d2;z-index:2;transform:scaleX(0.8648);transform-origin:0 0;">Configurações</span>
<span id="menu9" class="tx" style="left:572.87px;top:104.04px;font:normal 400 8.0px 'Liberation Sans',sans-serif;color:#d2d2d2;z-index:2;transform:scaleX(0.8106);transform-origin:0 0;">Janela</span>
<span id="menu10" class="tx" style="left:597.0px;top:104.04px;font:normal 400 8.0px 'Liberation Sans',sans-serif;color:#d2d2d2;z-index:2;transform:scaleX(0.8789);transform-origin:0 0;">Ajuda</span>
<span id="ktitle" class="tx" style="left:303.11px;top:91.11px;font:normal 400 7.447px 'Liberation Sans',sans-serif;color:#333;z-index:2;transform:scaleX(0.9342);transform-origin:0 0;">[Não foi salvo]  (67,8 MiB) * - Krita</span>
<span id="normal" class="tx" style="left:404.4px;top:117.64px;font:normal 400 8.0px 'Liberation Sans',sans-serif;color:#c8c8c8;z-index:2;transform:scaleX(0.9334);transform-origin:0 0;">Normal</span>
<span id="opac" class="tx" style="left:555.65px;top:116.04px;font:normal 400 8.0px 'Liberation Sans',sans-serif;color:#e8eef5;z-index:2;transform:scaleX(0.8747);transform-origin:0 0;">Opacidade: 100%</span>
<span id="tam" class="tx" style="left:650.86px;top:116.04px;font:normal 400 8.0px 'Liberation Sans',sans-serif;color:#d8d8d8;z-index:2;transform:scaleX(0.8633);transform-origin:0 0;">Tamanho: 40,00 px</span>
<span id="doctitle" class="tx" style="left:704.51px;top:132.61px;font:normal 400 7.447px 'Liberation Sans',sans-serif;color:#c8c8c8;z-index:2;transform:scaleX(0.9441);transform-origin:0 0;">[Não foi salvo]  (67,8 MiB) *</span>
<span id="sel1" class="tx" style="left:1187.21px;top:133.1px;font:normal 400 7.5px 'Liberation Sans',sans-serif;color:#c8c8c8;z-index:2;transform:scaleX(0.785);transform-origin:0 0;">Seletor de c...</span>
<span id="opc" class="tx" style="left:1239.42px;top:133.1px;font:normal 400 7.5px 'Liberation Sans',sans-serif;color:#c8c8c8;z-index:2;transform:scaleX(0.7547);transform-origin:0 0;">Opções da...</span>
<span id="selav" class="tx" style="left:1187.2px;top:143.9px;font:normal 400 7.5px 'Liberation Sans',sans-serif;color:#c8c8c8;z-index:2;transform:scaleX(0.7963);transform-origin:0 0;">Seletor de cor avançado</span>
<span id="camadas" class="tx" style="left:1187.2px;top:247.1px;font:normal 400 7.5px 'Liberation Sans',sans-serif;color:#c8c8c8;z-index:2;transform:scaleX(0.7955);transform-origin:0 0;">Camadas</span>
<span id="lnormal" class="tx" style="left:1180.46px;top:257.6px;font:normal 400 7.5px 'Liberation Sans',sans-serif;color:#c8c8c8;z-index:2;transform:scaleX(0.8961);transform-origin:0 0;">Normal</span>
<span id="lopac" class="tx" style="left:1193.69px;top:269.1px;font:normal 400 7.5px 'Liberation Sans',sans-serif;color:#e0e8f0;z-index:2;transform:scaleX(0.8312);transform-origin:0 0;">Opacidade: 100%</span>
<span id="layer1" class="tx" style="left:1212.7px;top:281.6px;font:normal 400 7.5px 'Liberation Sans',sans-serif;color:#c8c8c8;z-index:2;transform:scaleX(0.8092);transform-origin:0 0;">Camada de pi...</span>
<span id="layer2" class="tx" style="left:1213.67px;top:292.1px;font:normal 400 7.5px 'Liberation Sans',sans-serif;color:#eef2f8;z-index:2;transform:scaleX(0.8903);transform-origin:0 0;">Camada de ...</span>
<span id="layer3" class="tx" style="left:1213.52px;top:303.1px;font:normal 400 7.5px 'Liberation Sans',sans-serif;color:#c8c8c8;z-index:2;transform:scaleX(0.8069);transform-origin:0 0;">Plano de fundo</span>
<span id="st1" class="tx" style="left:303.84px;top:606.14px;font:normal 400 7.2px 'Liberation Sans',sans-serif;color:#c0c0c0;z-index:2;transform:scaleX(0.9389);transform-origin:0 0;">b) Basic-5 Size</span>
<span id="st2" class="tx" style="left:557.36px;top:605.84px;font:normal 400 7.2px 'Liberation Sans',sans-serif;color:#c0c0c0;z-index:2;transform:scaleX(0.9377);transform-origin:0 0;">RGB/Alfa (8-bits inteiros/canal)  sRGB-elle-V2-srgbtrc.icc</span>
<span id="st3" class="tx" style="left:1046.26px;top:605.64px;font:normal 400 7.2px 'Liberation Sans',sans-serif;color:#c0c0c0;z-index:2;transform:scaleX(0.9443);transform-origin:0 0;">2.480 x 3.508 (67,8 MiB)</span>
<span id="st4" class="tx" style="left:1135.72px;top:606.42px;font:normal 400 7.2px 'Liberation Sans',sans-serif;color:#c0c0c0;z-index:2;transform:scaleX(0.9877);transform-origin:0 0;">0.00°</span>
<span id="st5" class="tx" style="left:1208.76px;top:606.42px;font:normal 400 7.2px 'Liberation Sans',sans-serif;color:#c0c0c0;z-index:2;transform:scaleX(0.9316);transform-origin:0 0;">100,0%</span>
<span id="pesq" class="tx" style="left:1181.49px;top:593.16px;font:normal 400 7px 'Liberation Sans',sans-serif;color:#707070;z-index:2;transform:scaleX(0.9195);transform-origin:0 0;">Pesquisar</span>
<span id="filtrar" class="tx" style="left:1227.48px;top:593.16px;font:normal 400 7px 'Liberation Sans',sans-serif;color:#c8c8c8;z-index:2;transform:scaleX(0.9221);transform-origin:0 0;">Filtrar na etiqueta</span>
<span id="d2n" class="tx" style="left:1066.65px;top:563.38px;font:normal 700 13.514px 'Liberation Sans',sans-serif;color:#d22a40;z-index:4;transform:scaleX(1.111);transform-origin:0 0;">marcelo</span>
<span id="d1n" class="tx" style="left:994.15px;top:563.38px;font:normal 700 13.514px 'Liberation Sans',sans-serif;color:#d22a40;z-index:4;transform:scaleX(1.111);transform-origin:0 0;">marcelo</span>
<span id="d3n" class="tx" style="left:1136.67px;top:563.38px;font:normal 700 13.514px 'Liberation Sans',sans-serif;color:#d22a40;z-index:4;transform:scaleX(1.0841);transform-origin:0 0;">luquinhasss</span>
<span id="d4n" class="tx" style="left:1234.75px;top:563.38px;font:normal 700 13.514px 'Liberation Sans',sans-serif;color:#d22a40;z-index:4;transform:scaleX(1.111);transform-origin:0 0;">Matheus</span>
<span id="d1a" class="tx" style="left:993.46px;top:579.45px;font:normal 700 15.5px 'Liberation Sans',sans-serif;color:#d22a40;z-index:4;transform:scaleX(0.962);transform-origin:0 0;">R$ 10.00</span>
<span id="d2a" class="tx" style="left:1066.73px;top:579.45px;font:normal 700 15.5px 'Liberation Sans',sans-serif;color:#d22a40;z-index:4;transform:scaleX(0.8975);transform-origin:0 0;">R$ 4.16</span>
<span id="d3a" class="tx" style="left:1136.67px;top:579.45px;font:normal 700 15.5px 'Liberation Sans',sans-serif;color:#d22a40;z-index:4;transform:scaleX(0.9473);transform-origin:0 0;">R$ 10.00</span>
<span id="d4a" class="tx" style="left:1234.77px;top:579.45px;font:normal 700 15.5px 'Liberation Sans',sans-serif;color:#d22a40;z-index:4;transform:scaleX(0.95);transform-origin:0 0;">R$ 30,00</span>
<span id="leia1" class="tx" style="left:20.22px;top:502.3px;font:normal 700 11.789px 'Liberation Sans',sans-serif;color:#fff;z-index:11;transform:scaleX(0.9503);transform-origin:0 0;">leia o código com a</span>
<span id="leia2" class="tx" style="left:21.53px;top:514.09px;font:normal 700 12.105px 'Liberation Sans',sans-serif;color:#fff;z-index:11;transform:scaleX(0.9679);transform-origin:0 0;">câmera do celular.</span>
</body></html>
